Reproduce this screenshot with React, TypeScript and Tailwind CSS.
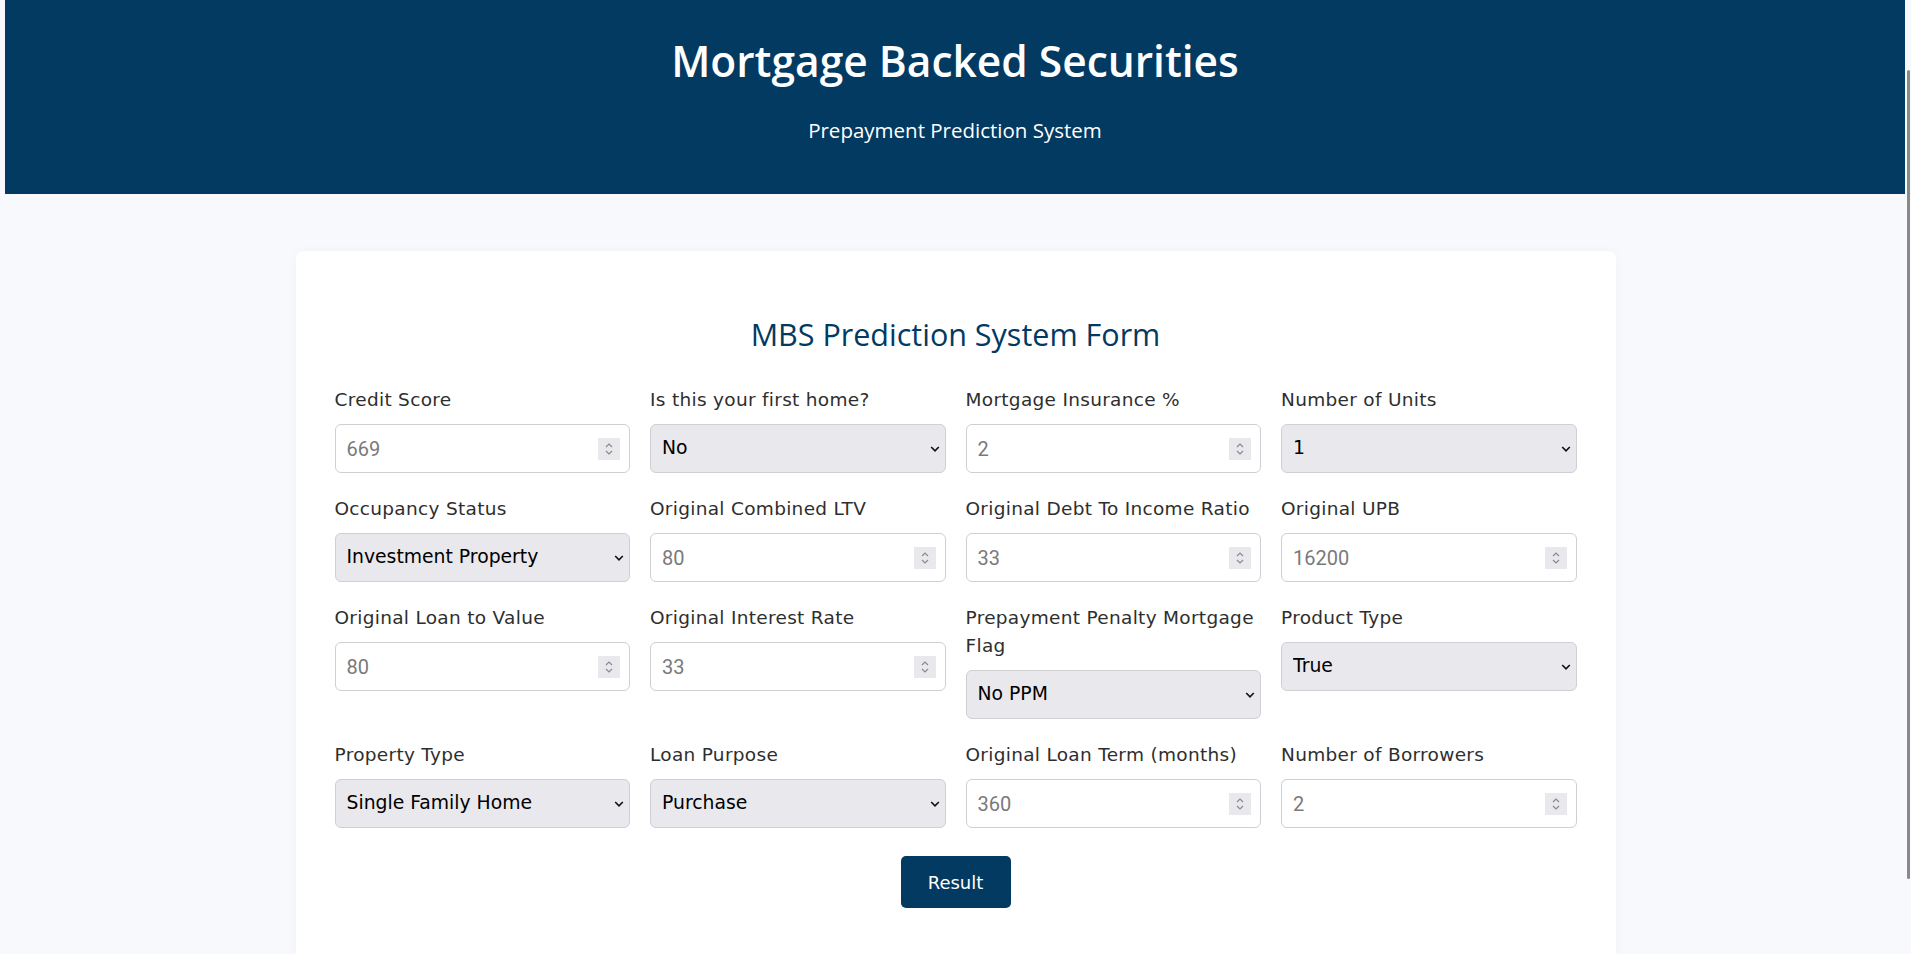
import React from "react";

type Field = {
  label: string[];
  kind: "number" | "select";
  value: string;
};

const fields: Field[] = [
  { label: ["Credit Score"], kind: "number", value: "669" },
  { label: ["Is this your first home?"], kind: "select", value: "No" },
  { label: ["Mortgage Insurance %"], kind: "number", value: "2" },
  { label: ["Number of Units"], kind: "select", value: "1" },
  { label: ["Occupancy Status"], kind: "select", value: "Investment Property" },
  { label: ["Original Combined LTV"], kind: "number", value: "80" },
  { label: ["Original Debt To Income Ratio"], kind: "number", value: "33" },
  { label: ["Original UPB"], kind: "number", value: "16200" },
  { label: ["Original Loan to Value"], kind: "number", value: "80" },
  { label: ["Original Interest Rate"], kind: "number", value: "33" },
  { label: ["Prepayment Penalty Mortgage", "Flag"], kind: "select", value: "No PPM" },
  { label: ["Product Type"], kind: "select", value: "True" },
  { label: ["Property Type"], kind: "select", value: "Single Family Home" },
  { label: ["Loan Purpose"], kind: "select", value: "Purchase" },
  { label: ["Original Loan Term (months)"], kind: "number", value: "360" },
  { label: ["Number of Borrowers"], kind: "number", value: "2" },
];

function Spinner() {
  return (
    <span className="pointer-events-none absolute right-[10px] top-1/2 flex h-[22px] w-[22px] -translate-y-1/2 items-center justify-center bg-[#e9e9ed]">
      <svg width="10" height="16" viewBox="0 0 10 16" fill="none" stroke="#8a8a8a" strokeWidth="1.2">
        <path d="M2 6 L5 3 L8 6" />
        <path d="M2 10 L5 13 L8 10" />
      </svg>
    </span>
  );
}

function Chevron() {
  return (
    <svg
      className="pointer-events-none absolute right-[6px] top-1/2 -translate-y-1/2"
      width="10"
      height="6"
      viewBox="0 0 10 6"
      fill="none"
      stroke="#111"
      strokeWidth="1.6"
    >
      <path d="M1.2 1 L5 4.8 L8.8 1" />
    </svg>
  );
}

function FormField({ label, kind, value }: Field) {
  return (
    <div className="flex flex-col">
      <label className="mb-[10px] text-[18.5px] leading-[28px] tracking-[0.3px] text-[#2e2e2e] [font-family:'DejaVu_Sans',sans-serif]">
        {label.map((line) => (
          <span key={line} className="block whitespace-nowrap">
            {line}
          </span>
        ))}
      </label>
      {kind === "number" ? (
        <div className="relative">
          <input
            type="text"
            readOnly
            placeholder={value}
            className="h-[49px] w-full rounded-[6px] border border-[#cfcfd4] bg-white px-[11px] text-[20px] text-[#222] outline-none placeholder:text-[#7a7a7a] [font-family:Roboto,sans-serif]"
          />
          <Spinner />
        </div>
      ) : (
        <div className="relative">
          <select
            defaultValue={value}
            className="h-[49px] w-full appearance-none rounded-[6px] border border-[#cfcfd4] bg-[#e9e9ed] pl-[11px] text-[18.8px] text-black outline-none [font-family:'DejaVu_Sans',sans-serif]"
          >
            <option>{value}</option>
          </select>
          <Chevron />
        </div>
      )}
    </div>
  );
}

export default function App() {
  return (
    <div className="min-h-screen bg-[#f8f9fc] [font-family:'Open_Sans',sans-serif]">
      <header className="ml-[5px] mr-[6px] flex h-[194px] flex-col items-center bg-[#023a62] pt-[33px] text-white">
        <h1 className="text-[42.5px] leading-[56px] font-semibold">Mortgage Backed Securities</h1>
        <p className="mt-[26px] text-[20.5px] leading-[30px]">Prepayment Prediction System</p>
      </header>

      <main className="flex justify-center pt-[57px] pb-10">
        <div className="w-[1320px] rounded-[8px] bg-white px-[39px] pt-[61px] pb-[60px] shadow-[0_0_12px_rgba(0,0,0,0.03)]">
          <h2 className="text-center text-[30.5px] leading-[44px] font-medium text-[#023a62]">
            MBS Prediction System Form
          </h2>
          <div className="mt-[30px] grid grid-cols-4 items-start gap-x-5 gap-y-[22px]">
            {fields.map((f) => (
              <FormField key={f.label.join(" ")} {...f} />
            ))}
          </div>
          <div className="mt-[28px] flex justify-center">
            <button className="h-[52px] w-[110px] rounded-[5px] bg-[#023a62] text-[18px] text-white [font-family:'DejaVu_Sans',sans-serif]">
              Result
            </button>
          </div>
        </div>
      </main>

      <div className="fixed right-[1px] top-[70px] h-[809px] w-[3px] rounded-full bg-[#8a8a8a]" />
    </div>
  );
}
